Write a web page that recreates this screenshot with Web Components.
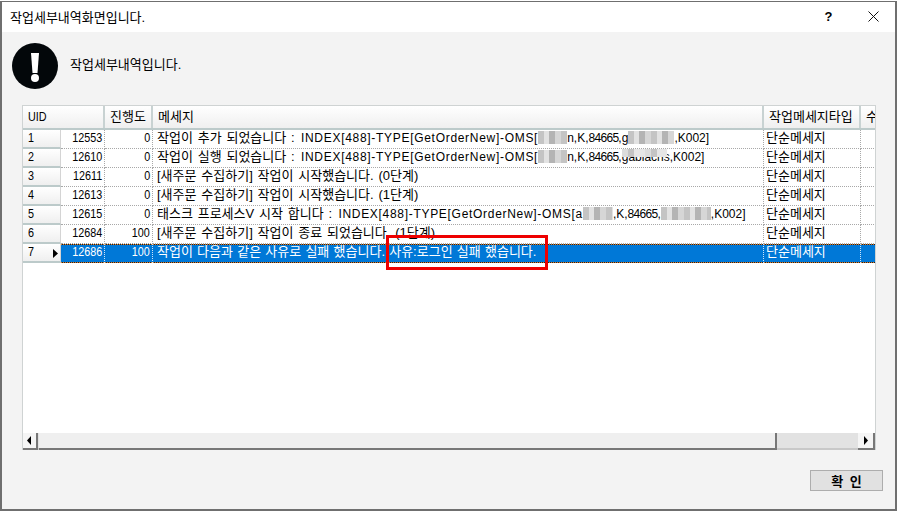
<!DOCTYPE html>
<html lang="ko">
<head>
<meta charset="utf-8">
<style>
html, body { margin: 0; height: 100%; background: #fff; overflow: hidden; }
body { font: 13px "Liberation Sans", "Noto Sans CJK KR", sans-serif; color: #000; word-spacing: 1.2px; }
</style>
</head>
<body>
<dialog-window>
  <title-bar>작업세부내역화면입니다.</title-bar>
  <message-head>작업세부내역입니다.</message-head>
  <data-grid>
    <grid-row num="1" uid="12553" prog="0" type="단순메세지">작업이 추가 되었습니다 : <lat-text>INDEX[488]-TYPE[GetOrderNew]-OMS[<blur-mask w="29"></blur-mask><lat-text tight>n,K,<lat-text digits>84665</lat-text>,g<blur-mask w="46"></blur-mask>,K002]</lat-text></lat-text></grid-row>
    <grid-row num="2" uid="12610" prog="0" type="단순메세지">작업이 실행 되었습니다 : <lat-text>INDEX[488]-TYPE[GetOrderNew]-OMS[<blur-mask w="29"></blur-mask><lat-text tight>n,K,<lat-text digits>84665</lat-text>,<blur-mask w="45" over></blur-mask>gabiachs,K002]</lat-text></lat-text></grid-row>
    <grid-row num="3" uid="12611" prog="0" type="단순메세지">[새주문 수집하기] 작업이 시작했습니다. (0단계)</grid-row>
    <grid-row num="4" uid="12613" prog="0" type="단순메세지">[새주문 수집하기] 작업이 시작했습니다. (1단계)</grid-row>
    <grid-row num="5" uid="12615" prog="0" type="단순메세지">태스크 프로세스V 시작 합니다 : <lat-text>INDEX[488]-TYPE[GetOrderNew]-OMS[a<blur-mask w="30"></blur-mask><lat-text tight>,K,<lat-text digits>84665</lat-text>,<blur-mask w="50"></blur-mask>,K002]</lat-text></lat-text></grid-row>
    <grid-row num="6" uid="12684" prog="100" type="단순메세지">[새주문 수집하기] 작업이 종료 되었습니다. (1단계)</grid-row>
    <grid-row num="7" uid="12686" prog="100" type="단순메세지" selected style="word-spacing:.6px">작업이 다음과 같은 사유로 실패 했습니다. 사유:로그인 실패 했습니다.</grid-row>
  </data-grid>
  <push-button>확 인</push-button>
  <red-box></red-box>
</dialog-window>

<script>
class DialogWindow extends HTMLElement {
  constructor() {
    super();
    this.attachShadow({ mode: "open" }).innerHTML = `
<style>
:host {
  display: flex; flex-direction: column; position: relative; box-sizing: border-box;
  width: 897px; height: 510px; margin-top: 1px;
  background: #f3f3f3; border: 2px solid #6f6f6f; border-width: 1px 2px 2px 2px;
}
</style>
<slot></slot>`;
  }
}

class TitleBar extends HTMLElement {
  constructor() {
    super();
    this.attachShadow({ mode: "open" }).innerHTML = `
<style>
:host {
  display: flex; align-items: center; box-sizing: border-box; height: 30px; padding: 0 0 2px 8px; background: #fff;
}
.text { flex: 1; }
.help { width: 45px; text-align: center; font: bold 13px "Liberation Sans", sans-serif; margin-right: 6px; }
svg { display: block; margin: 0 16px 0 11px; }
</style>
<div class="text"><slot></slot></div>
<div class="help">?</div>
<svg width="11" height="11" viewBox="0 0 11 11"><path d="M.5.5l10 10M10.500.5l-10 10" stroke="#111" fill="none"/></svg>`;
  }
}

class MessageHead extends HTMLElement {
  constructor() {
    super();
    this.attachShadow({ mode: "open" }).innerHTML = `
<style>
:host { display: flex; align-items: flex-start; gap: 12px; height: 62px; padding: 11px 0 0 10px; }
svg { display: block; flex: none; }
.text { height: 46px; line-height: 44px; }
</style>
<svg width="46" height="46" viewBox="0 0 46 46">
  <circle cx="23" cy="23" r="23" fill="#03070a"/>
  <path d="M19 10h8l-1.500 20h-5z" fill="#fff"/>
  <circle cx="23" cy="35" r="4" fill="#fff"/>
</svg>
<div class="text"><slot></slot></div>`;
  }
}

class DataGrid extends HTMLElement {
  constructor() {
    super();
    this.attachShadow({ mode: "open" }).innerHTML = `
<style>
:host {
  display: flex; flex-direction: column; box-sizing: border-box;
  width: 854px; height: 345px; margin-left: 20px; background: #fff;
  border: 1px solid #cfd3d3; border-bottom: 0;
}
.head { display: flex; flex: none; height: 24px; box-sizing: border-box; border-bottom: 2px solid #bccaca; overflow: hidden; }
.head div {
  box-sizing: border-box; height: 22px; line-height: 21px; padding-left: 5px; flex: none; white-space: nowrap;
  background: linear-gradient(#fff, #efefef); border-right: 2px solid #c8d2d2;
}
.n { display: inline-block; transform: scaleX(.83); transform-origin: left; }
.rows { flex: 1; overflow: hidden; }
.bar { display: flex; flex: none; height: 15px; background: #e2e2e2; border-bottom: 2px solid #c8c8c8; }
.btn { flex: none; display: flex; align-items: center; justify-content: center; background: #f5f5f5; box-sizing: border-box; }
.left { width: 15px; border-bottom: 2px solid #777; border-right: 2px solid #777; margin-bottom: -2px; }
.thumb { width: 738px; background: #efefef; border-bottom: 2px solid #777; border-right: 2px solid #777; box-sizing: border-box; margin: 0 0 -2px 1px; }
.track { flex: 1; }
.right { width: 17px; border-bottom: 2px solid #777; border-right: 2px solid #777; margin-bottom: -2px; }
</style>
<div class="head">
  <div style="width:82px"><span class="n">UID</span></div>
  <div style="width:48px">진행도</div>
  <div style="width:611px">메세지</div>
  <div style="width:97px">작업메세지타입</div>
  <div style="width:15px;border:0">수</div>
</div>
<div class="rows"><slot></slot></div>
<div class="bar">
  <div class="btn left"><svg width="5" height="9" viewBox="0 0 5 9"><path d="M4 0v9L0 4.500z"/></svg></div>
  <div class="thumb"></div>
  <div class="track"></div>
  <div class="btn right"><svg width="5" height="9" viewBox="0 0 5 9"><path d="M1 0v9l4-4.500z"/></svg></div>
</div>`;
  }
}

const rowTemplate = document.createElement("template");
rowTemplate.innerHTML = `
<style>
:host { display: flex; height: 19px; box-sizing: border-box; line-height: 16px; }
.cell { box-sizing: border-box; flex: none; height: 19px; border-bottom: 1px dotted #a8a8a8; border-right: 1px dotted #a8a8a8; white-space: nowrap; overflow: hidden; }
.num {
  flex: none; box-sizing: border-box; width: 38px; height: 19px; padding-left: 5px; position: relative;
  background: linear-gradient(#fff, #efefef); border-bottom: 2px solid #bccaca; border-right: 1px solid #d4d4d4;
}
.uid { width: 44px; text-align: right; padding-right: 2px; }
.prog { width: 48px; text-align: right; padding-right: 2px; }
.msg { width: 611px; padding-left: 4px; }
.type { width: 97px; padding-left: 2px; }
.rest { width: 15px; border-right: 0; }
.n { display: inline-block; transform: scaleX(.83); transform-origin: right; }
#num { transform-origin: left; }
.arrow { position: absolute; right: 2px; top: 5px; display: none; }
:host([selected]) .arrow { display: block; }
:host([selected]) .cell {
  background-color: #0078d7; color: #fff; border-right-color: #cfe4f7;
  border-bottom: 0;
  background-image:
    repeating-linear-gradient(90deg, #e07a1a 0 1px, #10243a 1px 2px),
    repeating-linear-gradient(90deg, #e07a1a 0 1px, #10243a 1px 2px);
  background-size: 100% 1px, 100% 1px;
  background-position: 0 0, 0 100%;
  background-repeat: no-repeat;
}
</style>
<div class="num"><span class="n" id="num"></span><svg class="arrow" width="5" height="9" viewBox="0 0 5 9"><path d="M0 0v9l5-4.500z"/></svg></div>
<div class="cell uid"><span class="n" id="uid"></span></div>
<div class="cell prog"><span class="n" id="prog"></span></div>
<div class="cell msg"><slot></slot></div>
<div class="cell type" id="type"></div>
<div class="cell rest"></div>`;

class GridRow extends HTMLElement {
  constructor() {
    super();
    this.attachShadow({ mode: "open" });
    this.shadowRoot.appendChild(rowTemplate.content.cloneNode(true));
  }
  connectedCallback() {
    for (const key of ["num", "uid", "prog", "type"]) {
      this.shadowRoot.querySelector("#" + key).textContent = this.getAttribute(key);
    }
  }
}

// 영문 구간은 자간을 넓힌다
class LatText extends HTMLElement {
  constructor() {
    super();
    // style 과 slot 사이에 공백을 두면 글자 사이가 벌어진다
    this.attachShadow({ mode: "open" }).innerHTML = `<style>
:host { font-size: 12px; letter-spacing: 0.7px; margin-left: 1.500px; }
:host([tight]) { letter-spacing: 0; margin-left: 0; }
:host([digits]) { letter-spacing: -0.7px; margin-left: 0; }
</style><slot></slot>`;
  }
}

// 모자이크 처리된 부분
class BlurMask extends HTMLElement {
  constructor() {
    super();
    this.attachShadow({ mode: "open" }).innerHTML = `
<style>
:host {
  display: inline-block; height: 13px; vertical-align: -2px;
  background:
    repeating-linear-gradient(90deg, #c4c4c4 0 6px, #e2e2e2 6px 11px, #b4b4b4 11px 17px, #d6d6d6 17px 23px);
}
:host([over]) { position: absolute; height: 8px; margin-top: 0; background: repeating-linear-gradient(90deg, #dcdcdc 0 6px, #c4c4c4 6px 12px, #e6e6e6 12px 23px); }
</style>`;
  }
  connectedCallback() {
    this.style.width = this.getAttribute("w") + "px";
  }
}

class PushButton extends HTMLElement {
  constructor() {
    super();
    this.attachShadow({ mode: "open" }).innerHTML = `
<style>
:host {
  display: flex; align-items: center; justify-content: center; box-sizing: border-box;
  width: 73px; height: 21px; margin: 20px 0 0 808px;
  background: #e1e1e1; border: 1px solid #adadad; font-weight: bold; white-space: pre; word-spacing: 3px;
}
</style>
<slot></slot>`;
  }
}

// 스크린샷 위에 그려진 빨간 표시
class RedBox extends HTMLElement {
  constructor() {
    super();
    this.attachShadow({ mode: "open" }).innerHTML = `
<style>
:host {
  position: absolute; left: 384px; top: 233px; box-sizing: border-box;
  width: 162px; height: 35px; border: 3px solid #ee0000;
}
</style>`;
  }
}

customElements.define("dialog-window", DialogWindow);
customElements.define("title-bar", TitleBar);
customElements.define("message-head", MessageHead);
customElements.define("data-grid", DataGrid);
customElements.define("grid-row", GridRow);
customElements.define("lat-text", LatText);
customElements.define("blur-mask", BlurMask);
customElements.define("push-button", PushButton);
customElements.define("red-box", RedBox);
</script>
</body>
</html>
